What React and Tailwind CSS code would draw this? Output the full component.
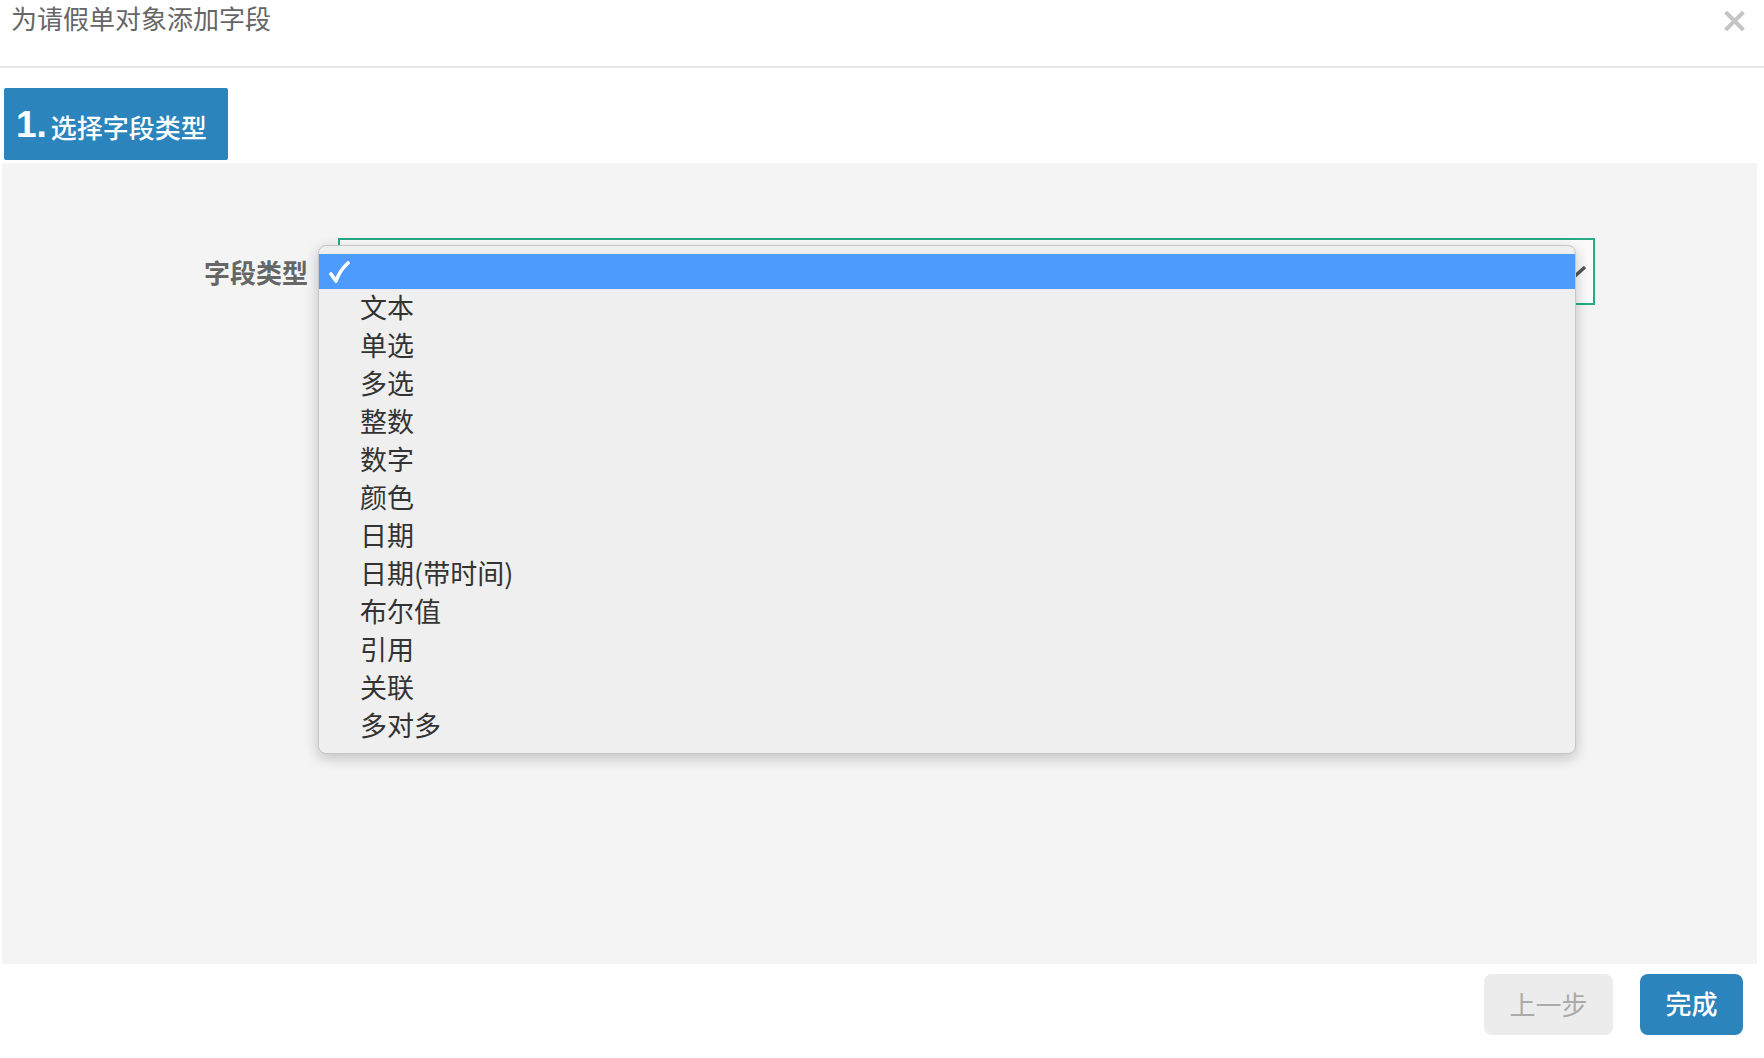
const FIELD_TYPES = [
  "文本",
  "单选",
  "多选",
  "整数",
  "数字",
  "颜色",
  "日期",
  "日期(带时间)",
  "布尔值",
  "引用",
  "关联",
  "多对多",
];

const font = { fontFamily: '"Noto Sans CJK SC", "Liberation Sans", sans-serif' };

const App = () => {
  return (
    <div className="relative h-[1058px] w-[1764px] overflow-hidden bg-white" style={font}>
      {/* header */}
      <div className="flex h-[68px] items-start justify-between border-b-2 border-[#e5e5e5]">
        <h1 className="pl-[11px] text-[26px] leading-[36px] font-normal text-[#666]">为请假单对象添加字段</h1>
        <button type="button" className="mr-[19px] mt-[11px] text-[#c4c4c4]">
          <svg width="21" height="20" viewBox="0 0 21 20">
            <path d="M3 2.5 L18 17.5 M18 2.5 L3 17.5" stroke="currentColor" strokeWidth="4" strokeLinecap="square" />
          </svg>
        </button>
      </div>

      {/* step badge */}
      <div className="ml-[4px] mt-[20px] flex h-[72px] w-[224px] items-center gap-[4px] rounded-[2px] bg-[#2b84bc] pl-[12px] text-white">
        <span className="text-[37px] leading-none font-bold" style={{ fontFamily: '"Liberation Sans", sans-serif' }}>
          1.
        </span>
        <span className="mt-[5px] text-[26px] leading-none font-medium">选择字段类型</span>
      </div>

      {/* body panel */}
      <div className="relative ml-[2px] mt-[3px] h-[801px] w-[1755px] bg-[#f4f4f4]">
        <div className="flex items-center pt-[75px]">
          <label className="w-[306px] text-right text-[26px] font-bold text-[#666]">字段类型</label>
          <div className="ml-[30px] flex h-[67px] w-[1257px] items-center justify-end border-2 border-[#27a98a] bg-[#fafafa] pr-[6px]">
            <svg width="26" height="16" viewBox="0 0 26 16">
              <path d="M2 3 L13 13 L24 3" fill="none" stroke="#555" strokeWidth="3.5" />
            </svg>
          </div>
        </div>

        {/* open dropdown menu */}
        <div className="absolute left-[316px] top-[82px] w-[1258px] rounded-[8px] border border-[#c6c6c6] bg-[#efefef] pb-[10px] pt-[8px] shadow-[0_4px_14px_rgba(0,0,0,0.22)]">
          <div className="flex h-[35px] items-center bg-[#4d9bfc] pl-[10px]">
            <svg width="22" height="24" viewBox="0 0 22 24">
              <path d="M2 14 L7 21 Q11 10 19 3" fill="none" stroke="#fff" strokeWidth="3.6" strokeLinecap="round" strokeLinejoin="round" />
            </svg>
          </div>
          <ul className="-mt-[2px]">
            {FIELD_TYPES.map((item) => (
              <li key={item} className="flex h-[38px] items-center pl-[41px] text-[27px] leading-none text-[#333]">
                {item}
              </li>
            ))}
          </ul>
        </div>
      </div>

      {/* footer */}
      <div className="mt-[10px] flex justify-end gap-[27px] pr-[21px]">
        <button
          type="button"
          disabled
          className="flex h-[61px] w-[129px] items-center justify-center rounded-[8px] bg-[#ececec] pb-[3px] text-[26px] text-[#aaa]"
        >
          上一步
        </button>
        <button
          type="button"
          className="flex h-[61px] w-[103px] items-center justify-center rounded-[8px] bg-[#2b84bc] pb-[4px] text-[26px] font-medium text-white"
        >
          完成
        </button>
      </div>
    </div>
  );
};

export default App;
